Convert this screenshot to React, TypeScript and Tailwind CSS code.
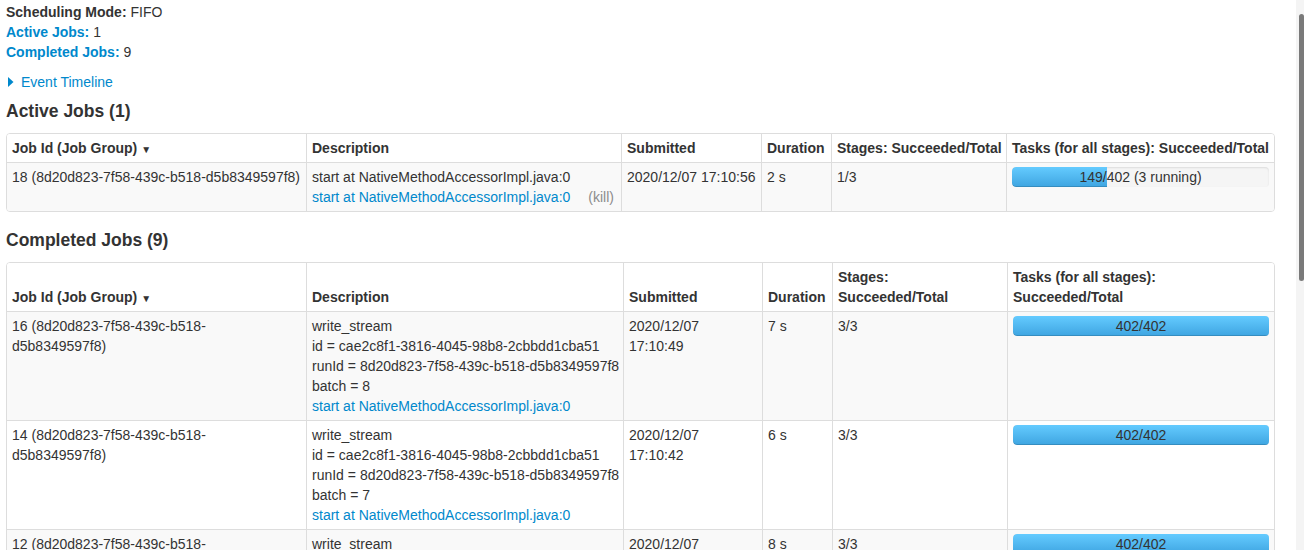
import React from "react";

interface CompletedJob {
  id: number;
  batch: number;
  submittedDay: string;
  submittedTime: string;
  duration: string;
}

const runId = "8d20d823-7f58-439c-b518-d5b8349597f8";
const queryId = "cae2c8f1-3816-4045-98b8-2cbbdd1cba51";

const completedJobs: CompletedJob[] = [
  { id: 16, batch: 8, submittedDay: "2020/12/07", submittedTime: "17:10:49", duration: "7 s" },
  { id: 14, batch: 7, submittedDay: "2020/12/07", submittedTime: "17:10:42", duration: "6 s" },
  { id: 12, batch: 6, submittedDay: "2020/12/07", submittedTime: "17:10:34", duration: "8 s" },
];

const ProgressBar: React.FC<{ done: number; total: number; label: string }> = ({
  done,
  total,
  label,
}) => (
  <div className="relative h-[20px] w-full overflow-hidden rounded-[4px] bg-[#f5f5f5] shadow-[inset_0_1px_2px_rgba(0,0,0,0.1)]">
    <div
      className="h-full rounded-l-[4px] bg-linear-to-b from-[#64cbff] to-[#3ea5e1] shadow-[inset_0_-1px_0_rgba(0,0,0,0.15)]"
      style={{ width: `${(done / total) * 100}%` }}
    />
    {/* label sits over the fill */}
    <span className="absolute inset-0 text-center leading-[20px] text-[#333]">{label}</span>
  </div>
);

const th = "border-l border-[#ddd] px-[5px] py-[4px] text-left align-bottom font-bold leading-[20px]";
const td = "border-l border-t border-[#ddd] px-[5px] py-[4px] align-top leading-[20px]";

const SortArrow = () => <span className="ml-[4px] text-[10px] leading-none">▼</span>;

const App: React.FC = () => {
  return (
    <div
      className="flex h-[550px] w-[1304px] overflow-hidden bg-white text-[14px] leading-[20px] text-[#333]"
      style={{ fontFamily: '"Liberation Sans", Arial, sans-serif' }}
    >
      <main className="flex flex-1 flex-col pt-[2px] pl-[6px] pr-[21px]">
        {/* Summary */}
        <ul>
          <li>
            <strong>Scheduling Mode: </strong>FIFO
          </li>
          <li>
            <a className="font-bold text-[#0088cc]">Active Jobs:</a> 1
          </li>
          <li>
            <a className="font-bold text-[#0088cc]">Completed Jobs:</a> 9
          </li>
        </ul>

        <div className="mt-[10px] flex items-center text-[#0088cc]">
          <svg width="6" height="10" viewBox="0 0 6 10" className="ml-[2px] mr-[7px]">
            <polygon points="0,0 5.5,5 0,10" fill="#0088cc" />
          </svg>
          <span>Event Timeline</span>
        </div>

        <h4 className="mt-[9px] text-[17.5px] font-bold leading-[20px]">Active Jobs (1)</h4>

        {/* Active jobs table */}
        <div className="mt-[12px] shrink-0 overflow-hidden rounded-[4px] border border-[#ddd]">
          <table className="w-full table-fixed border-separate border-spacing-0">
            <thead>
              <tr className="bg-white">
                <th className={`${th} w-[299px] border-l-0`}>
                  Job Id (Job Group)
                  <SortArrow />
                </th>
                <th className={`${th} w-[315px]`}>Description</th>
                <th className={`${th} w-[140px]`}>Submitted</th>
                <th className={`${th} w-[70px]`}>Duration</th>
                <th className={`${th} w-[175px] whitespace-nowrap`}>Stages: Succeeded/Total</th>
                <th className={`${th} whitespace-nowrap`}>Tasks (for all stages): Succeeded/Total</th>
              </tr>
            </thead>
            <tbody>
              <tr className="bg-[#f9f9f9]">
                <td className={`${td} border-l-0 whitespace-nowrap`}>18 ({runId})</td>
                <td className={td}>
                  <div className="whitespace-nowrap">start at NativeMethodAccessorImpl.java:0</div>
                  <div className="flex justify-between whitespace-nowrap">
                    <a className="text-[#0088cc]">start at NativeMethodAccessorImpl.java:0</a>
                    <a className="mr-[2px] text-[#8c8c8c]">(kill)</a>
                  </div>
                </td>
                <td className={`${td} whitespace-nowrap`}>2020/12/07 17:10:56</td>
                <td className={td}>2 s</td>
                <td className={td}>1/3</td>
                <td className={td}>
                  <ProgressBar done={149} total={402} label="149/402 (3 running)" />
                </td>
              </tr>
            </tbody>
          </table>
        </div>

        <h4 className="mt-[18px] text-[17.5px] font-bold leading-[20px]">Completed Jobs (9)</h4>

        {/* Completed jobs table */}
        <div className="mt-[12px] shrink-0 overflow-hidden rounded-[4px] border border-[#ddd]">
          <table className="w-full table-fixed border-separate border-spacing-0">
            <thead>
              <tr className="bg-white">
                <th className={`${th} w-[299px] border-l-0`}>
                  Job Id (Job Group)
                  <SortArrow />
                </th>
                <th className={`${th} w-[317px]`}>Description</th>
                <th className={`${th} w-[139px]`}>Submitted</th>
                <th className={`${th} w-[70px]`}>Duration</th>
                <th className={`${th} w-[175px]`}>
                  Stages:
                  <br />
                  Succeeded/Total
                </th>
                <th className={th}>
                  Tasks (for all stages):
                  <br />
                  Succeeded/Total
                </th>
              </tr>
            </thead>
            <tbody>
              {completedJobs.map((job, i) => (
                <tr key={job.id} className={i % 2 === 0 ? "bg-[#f9f9f9]" : "bg-white"}>
                  <td className={`${td} border-l-0`}>
                    {job.id} (8d20d823-7f58-439c-b518-
                    <br />
                    d5b8349597f8)
                  </td>
                  <td className={`${td} whitespace-nowrap`}>
                    <div>write_stream</div>
                    <div>id = {queryId}</div>
                    <div>runId = {runId}</div>
                    <div>batch = {job.batch}</div>
                    <a className="text-[#0088cc]">start at NativeMethodAccessorImpl.java:0</a>
                  </td>
                  <td className={td}>
                    {job.submittedDay}
                    <br />
                    {job.submittedTime}
                  </td>
                  <td className={td}>{job.duration}</td>
                  <td className={td}>3/3</td>
                  <td className={td}>
                    <ProgressBar done={402} total={402} label="402/402" />
                  </td>
                </tr>
              ))}
            </tbody>
          </table>
        </div>
      </main>

      {/* scrollbar */}
      <div className="w-[8px] shrink-0 bg-[#f4f4f4] pt-[14px]">
        <div className="ml-[3px] h-[267px] w-[5px] rounded-full bg-[#7a7a7a]" />
      </div>
    </div>
  );
};

export default App;
